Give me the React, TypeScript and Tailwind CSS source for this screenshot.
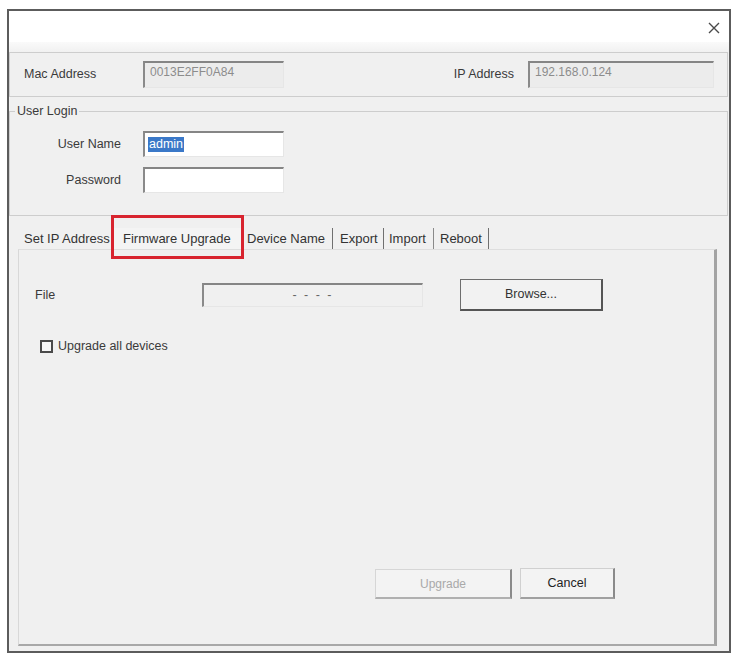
import React from "react";

const font = { fontFamily: '"Liberation Sans", Arial, sans-serif' };

function Sunken({ className, children }: { className: string; children?: React.ReactNode }) {
  return (
    <div
      className={
        "flex items-center border-t-2 border-l-2 border-r border-b border-t-[#858585] border-l-[#8a8a8a] border-r-[#e6e6e6] border-b-[#e6e6e6] " +
        className
      }
    >
      {children}
    </div>
  );
}

export default function App() {
  return (
    <div className="w-[732px] h-[654px] bg-white overflow-hidden" style={font}>
      <div className="ml-[7px] mt-[9px] w-[724px] h-[644px] border-2 border-[#5c5c5c] bg-[#f0f0f0] flex flex-col text-[12.5px] text-[#3a3a3a]">
        {/* title bar */}
        <div className="h-[31px] bg-white flex items-center justify-end pr-[9px]">
          <svg width="12" height="12" viewBox="0 0 12 12" className="mt-[2px]">
            <path d="M1 1 L11 11 M11 1 L1 11" stroke="#4a4a4a" strokeWidth="1.4" />
          </svg>
        </div>
        <div className="h-[10px] bg-gradient-to-b from-[#fafafa] to-[#f1f1f1]" />

        {/* Mac / IP group */}
        <div className="h-[45px] border border-[#cdcdcd] mr-[1px] flex items-center">
          <div className="w-[133px] pl-[14px]">Mac Address</div>
          <Sunken className="w-[141px] h-[27px] bg-[#ececec] pl-[5px] text-[#8c8c8c] text-[12px] pb-[6px]">
            0013E2FF0A84
          </Sunken>
          <div className="flex-1" />
          <div className="mr-[14px]">IP Address</div>
          <Sunken className="w-[186px] h-[27px] bg-[#ececec] pl-[5px] text-[#8c8c8c] text-[12px] pb-[6px] mr-[13px]">
            192.168.0.124
          </Sunken>
        </div>

        {/* User login group */}
        <fieldset className="mt-[7px] mr-[1px] border border-[#cdcdcd] h-[112px]">
          <legend className="ml-[5px] px-[2px] leading-[15px]">User Login</legend>
          <div className="flex items-center mt-[12px]">
            <div className="w-[111px] text-right">User Name</div>
            <Sunken className="ml-[22px] w-[141px] h-[26px] bg-white pl-[3px]">
              <span className="bg-[#3a78c8] text-white px-[1px] leading-[15px]">admin</span>
            </Sunken>
          </div>
          <div className="flex items-center mt-[10px]">
            <div className="w-[111px] text-right">Password</div>
            <Sunken className="ml-[22px] w-[141px] h-[26px] bg-white" />
          </div>
        </fieldset>

        {/* Tabs */}
        <div className="relative h-[33px] flex items-end pl-[11px] text-[13px] text-[#333]">
          <div className="w-[93px] h-[21px] flex items-center pl-[4px]">Set IP Address</div>
          <div className="w-[128px] h-[21px] flex items-center pl-[10px] bg-[#f4f4f4]">Firmware Upgrade</div>
          <div className="w-[92px] h-[21px] flex items-center pl-[6px] border-r border-[#707070]">Device Name</div>
          <div className="w-[51px] h-[21px] flex items-center pl-[7px] border-r border-[#707070]">Export</div>
          <div className="w-[50px] h-[21px] flex items-center pl-[5px] border-r border-[#8a8a8a]">Import</div>
          <div className="w-[55px] h-[21px] flex items-center pl-[6px] border-r border-[#707070]">Reboot</div>
          <div className="absolute left-[102px] top-[-1px] w-[133px] h-[44px] border-[3px] border-[#d8242f] z-10" />
        </div>

        {/* Tab panel */}
        <div className="ml-[9px] w-[699px] h-[397px] border-t border-l border-t-[#dedede] border-l-[#d8d8d8] border-r-[3px] border-r-[#a3a3a3] border-b-2 border-b-[#a8a8a8] flex flex-col">
          <div className="mt-[29px] h-[32px] flex items-center">
            <div className="w-[183px] pl-[16px]">File</div>
            <Sunken className="w-[221px] h-[24px] bg-[#f0f0f0] justify-center text-[#666] tracking-[2px]">
              - - - -
            </Sunken>
            <button className="ml-[37px] w-[143px] h-[32px] border border-[#6e6e6e] border-b-2 border-r-2 border-b-[#555] border-r-[#555] bg-[#f2f2f2] text-[#333]">
              Browse...
            </button>
          </div>
          <div className="mt-[28px] h-[14px] flex items-center pl-[21px]">
            <div className="w-[13px] h-[13px] border-2 border-[#4a4a4a] bg-[#f7f7f7]" />
            <div className="ml-[5px]">Upgrade all devices</div>
          </div>
          <div className="flex-1" />
          <div className="flex justify-end items-end mr-[99px] mb-[45px] gap-[8px]">
            <button className="w-[137px] h-[30px] border border-[#d6d6d6] border-r-2 border-r-[#8a8a8a] border-b-2 border-b-[#b0b0b0] bg-[#f3f3f3] text-[#a9a9a9] text-[12px]">
              Upgrade
            </button>
            <button className="w-[95px] h-[31px] border border-[#d0d0d0] border-r-2 border-r-[#8a8a8a] border-b-2 border-b-[#a0a0a0] bg-[#f3f3f3] text-[#222]">
              Cancel
            </button>
          </div>
        </div>
      </div>
    </div>
  );
}
